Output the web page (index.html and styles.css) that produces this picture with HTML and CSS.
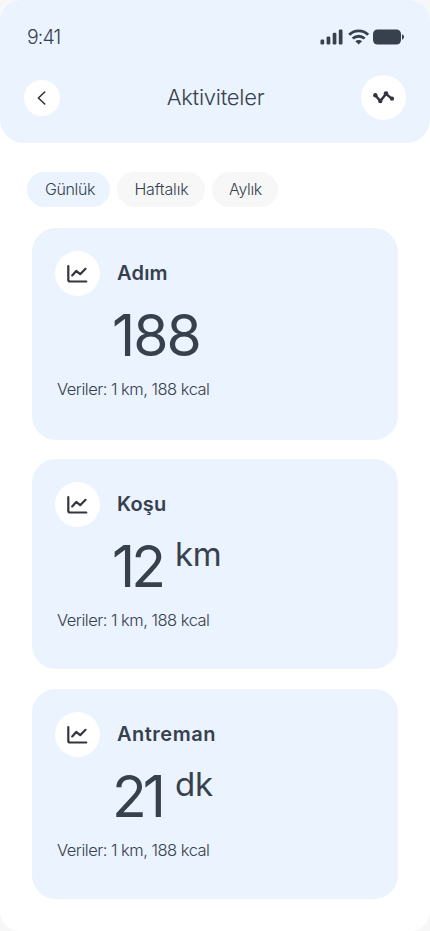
FILE: index.html
```html
<!DOCTYPE html>
<html lang="tr">
<head>
<meta charset="utf-8">
<meta name="viewport" content="width=device-width">
<title>Aktiviteler</title>
<link rel="stylesheet" href="styles.css">
</head>
<body>
<svg class="defs" aria-hidden="true">
  <symbol id="chart" viewBox="0 0 21 18"><path d="M1.3 1.2v13.5a1.8 1.8 0 0 0 1.8 1.8h16.2M5.2 10.4l4-4.5 4 3.3 5.3-5.4" fill="none" stroke="currentColor" stroke-width="2.2" stroke-linecap="round" stroke-linejoin="round"/></symbol>
</svg>
<main class="screen">
  <header class="header">
    <div class="status">
      <span class="time">9:41</span>
      <svg class="system" viewBox="0 0 84 16">
        <g fill="currentColor">
          <rect x="0.5" y="10.5" width="3.7" height="5" rx="1.2"/>
          <rect x="6.6" y="7.5" width="3.7" height="8" rx="1.2"/>
          <rect x="12.7" y="3.7" width="3.7" height="11.8" rx="1.2"/>
          <rect x="18.8" y="0.5" width="3.7" height="15" rx="1.2"/>
          <rect x="53" y="0.5" width="28" height="15" rx="4.5"/>
          <path d="M82 5.3c2.7 1 2.7 4.4 0 5.4z"/>
          <path d="M38.7 15.6l-3.4-3.4c1.9-1.7 4.9-1.7 6.8 0z"/>
        </g>
        <path d="M29.2 5.700c5.4-5.1 13.6-5.1 19 0M32.7 9.5c3.5-3.1 8.500-3.1 12 0" fill="none" stroke="currentColor" stroke-width="2.900"/>
      </svg>
    </div>
    <div class="bar">
      <button class="round back" aria-label="Geri"><svg width="9" height="14" viewBox="0 0 9 14"><path d="M7.700 1L1.400 7l6.300 6" fill="none" stroke="currentColor" stroke-width="1.6" stroke-linecap="round" stroke-linejoin="round"/></svg></button>
      <h1 class="title">Aktiviteler</h1>
      <button class="round" aria-label="Grafik"><svg width="22" height="13" viewBox="0 0 22 13"><path d="M2.300 4.200l5 5.900L13 2.900l5.900 4.800" fill="none" stroke="currentColor" stroke-width="2.400"/><g fill="currentColor"><circle cx="2.300" cy="4.300" r="2.200"/><circle cx="7.300" cy="10" r="2.200"/><circle cx="13" cy="2.700" r="2.400"/><circle cx="19" cy="7.700" r="2.100"/></g></svg></button>
    </div>
  </header>
  <nav class="tabs">
    <button class="tab tab-daily active">Günlük</button>
    <button class="tab tab-weekly">Haftalık</button>
    <button class="tab tab-monthly">Aylık</button>
  </nav>
  <section class="cards">
    <article class="card card-steps">
      <div class="card-head"><span class="round"><svg class="chart"><use href="#chart"/></svg></span><h2 class="name">Adım</h2></div>
      <div class="value"><span class="number">188</span></div>
      <p class="details">Veriler: 1 km, 188 kcal</p>
    </article>
    <article class="card card-run">
      <div class="card-head"><span class="round"><svg class="chart"><use href="#chart"/></svg></span><h2 class="name">Koşu</h2></div>
      <div class="value"><span class="number">12</span><span class="unit">km</span></div>
      <p class="details">Veriler: 1 km, 188 kcal</p>
    </article>
    <article class="card card-training">
      <div class="card-head"><span class="round"><svg class="chart"><use href="#chart"/></svg></span><h2 class="name">Antreman</h2></div>
      <div class="value"><span class="number">21</span><span class="unit">dk</span></div>
      <p class="details">Veriler: 1 km, 188 kcal</p>
    </article>
  </section>
</main>
</body>
</html>
```
FILE: styles.css
```css
* { box-sizing: border-box; }
body { margin: 0; background: #f7f7f7; color: #36414d; font-family: Inter, "Liberation Sans", sans-serif; }
button { border: 0; padding: 0; font: inherit; color: inherit; }
h1, h2, p { margin: 0; }
.defs { display: none; }
.screen { width: 430px; height: 931px; overflow: hidden; background: #fff; border-radius: 20px; }
.header { height: 143px; background: #ebf3ff; border-radius: 20px 20px 24px 24px; padding: 24px 24px 0; }
.status { height: 25px; display: flex; align-items: center; justify-content: space-between; padding: 0 2px 0 3px; }
.time { font-size: 19.500px; font-weight: 300; letter-spacing: -0.900px; }
.system { width: 84px; height: 16px; }
.bar { margin-top: 26px; height: 45px; display: flex; align-items: center; justify-content: space-between; }
.round { flex: none; width: 45px; height: 45px; border-radius: 50%; background: #fff; display: flex; align-items: center; justify-content: center; color: #35343f; }
.back { width: 36px; height: 36px; padding-right: 2px; }
.title { font-size: 22px; line-height: 30px; font-weight: 300; letter-spacing: -0.250px; padding: 0 0 2px 10px; }
.tabs { display: flex; gap: 7px; padding: 29px 0 0 27px; }
.tab { height: 35px; border-radius: 18px; background: #f7f7f7; font-size: 16px; font-weight: 300; letter-spacing: -0.350px; padding: 0 0 2px 1px; text-align: center; }
.active { background: #ebf3ff; }
.tab-daily { width: 83px; padding-left: 3px; }
.tab-weekly { width: 88px; letter-spacing: -0.150px; }
.tab-monthly { width: 66px; }
.cards { padding: 21px 32px 0; display: flex; flex-direction: column; gap: 20px; }
.card { height: 210px; background: #ebf3ff; border-radius: 24px; padding: 23px 23px 0; }
.card-steps { height: 212px; margin-bottom: -1px; }
.card-head { display: flex; align-items: center; gap: 17px; }
.name { font-size: 20px; line-height: 28px; font-weight: 600; padding-bottom: 1px; }
.card-steps .name, .card-run .name { letter-spacing: 0.200px; }
.card-training .name { letter-spacing: 0.500px; }
.chart { width: 21px; height: 18px; }
.value { height: 78px; display: flex; padding-left: 57px; }
.number { font-size: 57px; line-height: 79px; letter-spacing: -2px; }
.card-run .number, .card-training .number { letter-spacing: -4px; }
.unit { font-size: 33px; line-height: 55px; margin-left: 13px; letter-spacing: -0.200px; }
.details { font-size: 16.500px; line-height: 24px; font-weight: 300; letter-spacing: -0.500px; padding: 3px 0 0 2px; }
```
